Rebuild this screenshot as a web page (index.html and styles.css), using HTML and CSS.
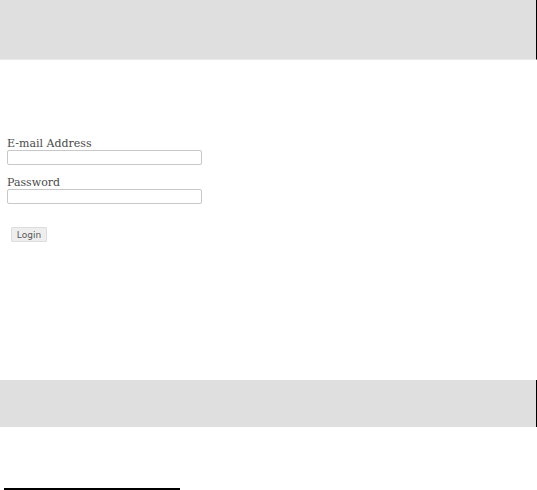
FILE: index.html
```html
<!DOCTYPE html>
<html lang="en">
<head>
  <meta charset="UTF-8">
  <meta name="viewport" content="width=device-width, initial-scale=1.0">
  <link rel="stylesheet" href="styles.css">
  <title>Login</title>
</head>
<body>
  <div class="topbar"></div>

  <div class="main">
    <form id="login-form" class="login-form">
      <div class="field">
        <label for="email">E-mail Address</label>
        <input type="text" id="email" />
      </div>
      <div class="field">
        <label for="password">Password</label>
        <input type="password" id="password" />
      </div>
      <button type="submit">Login</button>
    </form>
  </div>

  <div class="bottombar"></div>

  <div class="footer">
    <div class="rule"></div>
  </div>
</body>
</html>
```

FILE: styles.css
```css
body {
  margin: 0;
  padding: 0;
  font-family: "DejaVu Serif", serif;
  background: #fff;
  color: #444;
}

.topbar {
  height: 59px;
  background: #dfdfdf;
  border-bottom: 1px solid #e9e9e9;
  border-right: 1px solid #000;
}

.main {
  height: 320px;
  box-sizing: border-box;
  padding: 77px 0 0 7px;
}

.login-form .field {
  display: flex;
  flex-direction: column;
  margin-bottom: 11px;
}

.login-form label {
  font-size: 11px;
  line-height: 13px;
  color: #4a4a4a;
}

.login-form input {
  width: 195px;
  height: 15px;
  box-sizing: border-box;
  margin: 0;
  padding: 0 3px;
  border: 1px solid #c8c8c8;
  border-radius: 2px;
  background: #fff;
  font-size: 10px;
}

.login-form button {
  margin: 12px 0 0 4px;
  width: 36px;
  height: 15px;
  padding: 0;
  font-family: "DejaVu Sans", sans-serif;
  font-size: 9px;
  color: #555;
  background: #eee;
  border: 1px solid #ddd;
  border-radius: 1px;
}

.bottombar {
  height: 47px;
  background: #dfdfdf;
  border-right: 1px solid #000;
}

.footer {
  padding: 61px 0 0 4px;
}

.rule {
  width: 176px;
  height: 2px;
  background: #000;
}
```
